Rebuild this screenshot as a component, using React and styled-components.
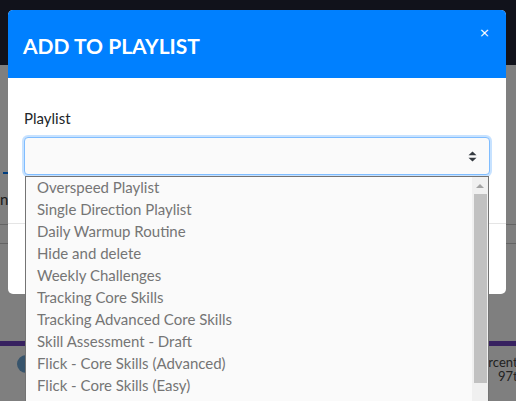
import React from "react";
import styled, { createGlobalStyle } from "styled-components";

const GlobalStyle = createGlobalStyle`
  html, body {
    margin: 0;
    padding: 0;
    width: 516px;
    height: 401px;
    overflow: hidden;
    font-family: "Lato", "Liberation Sans", sans-serif;
  }
`;

/* page that sits behind the backdrop */
const Page = styled.div`
  position: relative;
  width: 516px;
  height: 401px;
  background: #fff;
  overflow: hidden;
`;

const Navbar = styled.div`
  height: 65px;
  background: #222437;
`;

const Tabs = styled.div`
  height: 110px;
  position: relative;
`;

const TabLine = styled.div`
  position: absolute;
  left: 3px;
  bottom: 1px;
  width: 6px;
  height: 2px;
  background: #007bff;
`;

const TableRow = styled.div`
  height: ${({ h }) => h}px;
  border-bottom: 1px solid #c8c8c8;
  font-size: 15px;
  color: #333;
  line-height: ${({ h }) => h}px;
`;

const Spacer = styled.div`
  height: ${({ h }) => h}px;
`;

const PurpleBar = styled.div`
  height: 5px;
  background: #6f42c1;
`;

const StatRow = styled.div`
  display: flex;
  justify-content: space-between;
  align-items: flex-start;
  padding-top: 9px;
`;

const Avatar = styled.div`
  width: 18px;
  height: 18px;
  margin-left: 17px;
  border-radius: 50%;
  background: #6fa8d8;
`;

const StatText = styled.div`
  font-size: 13px;
  line-height: 14px;
  color: #444;
  margin-right: -12px;
  width: 54px;
  white-space: nowrap;
`;

const StatValue = styled.div`
  padding-left: 24px;
`;

const BottomHeading = styled.div`
  display: flex;
  justify-content: space-between;
  font-size: 24px;
  font-weight: 700;
  color: #000;
  margin-top: 14px;
  margin-left: -14px;
  margin-right: -6px;
`;

const Backdrop = styled.div`
  position: fixed;
  inset: 0;
  background: rgba(0, 0, 0, 0.5);
`;

/* modal */
const Modal = styled.div`
  position: fixed;
  left: 8px;
  top: 10px;
  width: 498px;
  background: #fff;
  border-radius: 5px;
`;

const ModalHeader = styled.div`
  height: 68px;
  background: #0080ff;
  border-radius: 5px 5px 0 0;
  display: flex;
  align-items: center;
  justify-content: space-between;
  padding: 0 16px 0 15px;
  box-sizing: border-box;
`;

const Title = styled.h4`
  margin: 2px 0 0;
  font-size: 21px;
  font-weight: 700;
  color: #fff;
`;

const Close = styled.span`
  align-self: flex-start;
  margin-top: 16px;
  font-family: "DejaVu Sans", sans-serif;
  font-size: 13px;
  color: #fff;
  line-height: 14px;
`;

const ModalBody = styled.div`
  padding: 29px 16px 48px;
`;

const Label = styled.label`
  display: block;
  font-size: 15px;
  line-height: 22px;
  color: #212529;
  margin-bottom: 8px;
`;

const SelectWrap = styled.div`
  position: relative;
`;

const SelectBox = styled.div`
  height: 38px;
  box-sizing: border-box;
  border: 1px solid #80bdff;
  border-radius: 4px;
  background: #fafafa;
  box-shadow: 0 0 0 2px rgba(0, 123, 255, 0.22);
  display: flex;
  align-items: center;
  justify-content: flex-end;
  padding-right: 12px;
`;

const Footer = styled.div`
  height: 70px;
  border-top: 1px solid #e5e5e5;
`;

/* open select list */
const Dropdown = styled.div`
  position: absolute;
  left: 1px;
  right: 1px;
  top: 39px;
  height: 240px;
  border: 1px solid #747474;
  background: #fafafa;
  display: flex;
  overflow: hidden;
`;

const Options = styled.ul`
  flex: 1;
  margin: -1px 0 0;
  padding: 0;
  list-style: none;
`;

const Option = styled.li`
  height: 22px;
  line-height: 22px;
  padding-left: 11px;
  font-size: 15px;
  color: #757575;
  white-space: nowrap;
`;

const Scrollbar = styled.div`
  width: 16px;
  background: #f0f0f0;
  display: flex;
  flex-direction: column;
  align-items: center;
`;

const ScrollArrow = styled.div`
  margin-top: 7px;
  width: 0;
  height: 0;
  border-left: 4px solid transparent;
  border-right: 4px solid transparent;
  border-bottom: 4px solid #a3a3a3;
`;

const Thumb = styled.div`
  margin-top: 6px;
  width: 13px;
  height: 189px;
  background: #c1c1c1;
`;

const SortIcon = () => (
  <svg width="9" height="11" viewBox="0 0 9 11">
    <path d="M0.5 4.2 L4.5 0.5 L8.5 4.2 Z" fill="#343a40" />
    <path d="M0.5 6.8 L4.5 10.5 L8.5 6.8 Z" fill="#343a40" />
  </svg>
);

const playlists = [
  "Overspeed Playlist",
  "Single Direction Playlist",
  "Daily Warmup Routine",
  "Hide and delete",
  "Weekly Challenges",
  "Tracking Core Skills",
  "Tracking Advanced Core Skills",
  "Skill Assessment - Draft",
  "Flick - Core Skills (Advanced)",
  "Flick - Core Skills (Easy)",
  "Flick - Core Skills (Medium)",
];

export default function App() {
  return (
    <>
      <GlobalStyle />
      <Page>
        <Navbar />
        <Tabs>
          <TabLine />
        </Tabs>
        <TableRow h={49}>n</TableRow>
        <TableRow h={18} />
        <Spacer h={97} />
        <PurpleBar />
        <StatRow>
          <Avatar />
          <StatText>
            Percentile
            <StatValue>97th</StatValue>
          </StatText>
        </StatRow>
        <BottomHeading>
          <span>Missi</span>
          <span>Le</span>
        </BottomHeading>
      </Page>
      <Backdrop />
      <Modal>
        <ModalHeader>
          <Title>ADD TO PLAYLIST</Title>
          <Close>×</Close>
        </ModalHeader>
        <ModalBody>
          <Label>Playlist</Label>
          <SelectWrap>
            <SelectBox>
              <SortIcon />
            </SelectBox>
            <Dropdown>
              <Options>
                {playlists.map((p) => (
                  <Option key={p}>{p}</Option>
                ))}
              </Options>
              <Scrollbar>
                <ScrollArrow />
                <Thumb />
              </Scrollbar>
            </Dropdown>
          </SelectWrap>
        </ModalBody>
        <Footer />
      </Modal>
    </>
  );
}
